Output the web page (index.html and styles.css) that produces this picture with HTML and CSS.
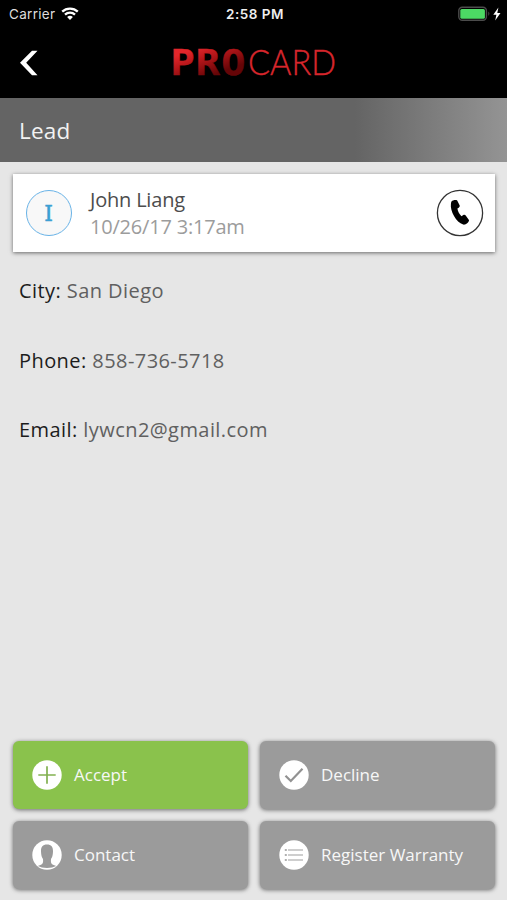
FILE: index.html
```
<!DOCTYPE html>
<html lang="en">
<head>
    <meta charset="UTF-8">
    <title>ProCard - Lead</title>
    <meta name="viewport" content="width=device-width, initial-scale=1">
    <link rel="stylesheet" href="styles.css">
</head>
<body>
    <header>
        <div class="status-bar">
            <div class="carrier">
                <span>Carrier</span>
                <svg width="18" height="14" viewBox="0 0 18 14">
                    <path d="M1.2 4.7a11.2 11.2 0 0 1 15.6 0M4 7.7a7.2 7.2 0 0 1 10 0" fill="none" stroke="#fff" stroke-width="2.3"/>
                    <path d="M9 13 6.1 10.1a4.2 4.2 0 0 1 5.8 0z" fill="#fff"/>
                </svg>
            </div>
            <div class="time">2:58 PM</div>
            <div class="power">
                <svg width="43" height="16" viewBox="0 0 43 16">
                    <rect x=".8" y="1.3" width="27.6" height="13" rx="3.5" fill="none" stroke="#4b4b4b" stroke-width="1.4"/>
                    <rect x="2.3" y="3" width="24.6" height="9.8" rx="1.5" fill="#4cd964"/>
                    <path d="M30.3 5.6q2.2 2.2 0 4.4z" fill="#4b4b4b"/>
                    <path d="M40.4 1.5 35.3 8.7h3.1l-1.2 5.9 5.3-7.7h-3.2z" fill="#fff"/>
                </svg>
            </div>
        </div>
        <div class="nav-bar">
            <a class="back" href="#" aria-label="Back">
                <svg width="18" height="26" viewBox="0 0 18 26">
                    <path d="M17.5.7H12L0 12.8 12 25.3h5.5L6.2 12.8z" fill="#fff"/>
                </svg>
            </a>
            <svg class="logo" width="170" height="56" viewBox="-2 -10 170 56">
                <defs>
                    <linearGradient id="red" gradientUnits="userSpaceOnUse" x1="20" y1="4" x2="32" y2="32">
                        <stop offset="0" stop-color="#e3262b"/>
                        <stop offset=".4" stop-color="#b5161a"/>
                        <stop offset="1" stop-color="#650507"/>
                    </linearGradient>
                </defs>
                <text class="logo-pro" x="-.5" y="30" transform="scale(1.15 1)" fill="url(#red)" stroke="url(#red)">PRO</text>
                <text class="logo-card" x="77" y="30" textLength="88" lengthAdjust="spacingAndGlyphs">CARD</text>
            </svg>
        </div>
    </header>

    <h1>Lead</h1>

    <main>
        <div class="card">
            <div class="avatar">I</div>
            <div class="who">
                <div class="name">John Liang</div>
                <div class="date">10/26/17 3:17am</div>
            </div>
            <a class="call" href="#" aria-label="Call">
                <svg width="48" height="48" viewBox="0 0 48 48">
                    <circle cx="24" cy="24" r="22.6" fill="#fff" stroke="#333" stroke-width="1.3"/>
                    <path d="M15.500 12.500c1.200-1.300 4.300-1.900 5.700-.9l2.500 4.900c.2 1.100-.3 1.800-1 2.200l-1.300.8c.5 3.100 1.900 5.500 4.100 7.700l1.800-1.100c.9-.5 1.900-.3 2.400.4l3.400 4.800c-.6 2.700-3 4.600-5.900 4.300-7-2-13.300-14-12.300-20.300.1-1.100.2-2.200.6-2.800z" fill="#000"/>
                </svg>
            </a>
        </div>

        <dl class="details">
            <div><dt>City:</dt> <dd>San Diego</dd></div>
            <div><dt>Phone:</dt> <dd>858-736-5718</dd></div>
            <div><dt>Email:</dt> <dd>lywcn2@gmail.com</dd></div>
        </dl>
    </main>

    <div class="actions">
        <button class="accept">
            <svg width="30" height="30" viewBox="0 0 30 30">
                <circle cx="15" cy="15" r="14.7" fill="#fff"/>
                <path d="M6.3 15h17.4M15 6.3v17.4" stroke="#82b150" stroke-width="1.7"/>
            </svg>
            <span>Accept</span>
        </button>
        <button>
            <svg width="30" height="30" viewBox="0 0 30 30">
                <circle cx="15" cy="15" r="14.7" fill="#fff"/>
                <path d="M6.5 15.7l5.3 5.3L23.5 8.7" fill="none" stroke="#929292" stroke-width="2.2"/>
            </svg>
            <span>Decline</span>
        </button>
        <button>
            <svg width="30" height="30" viewBox="0 0 30 30">
                <circle cx="15" cy="15" r="14.7" fill="#fff"/>
                <path d="M15 4.500c4.200 0 6.200 2.700 6 6.900-.1 3.800-.9 6-2 7.600-.4 3.200.1 5 2 5.700l3.200 1.200Q20.500 28 15 28t-9.200-2.100L9 24.700c1.900-.7 2.400-2.500 2-5.700-1.100-1.600-1.900-3.800-2-7.600-.2-4.200 1.800-6.900 6-6.900z" fill="#9a9a9a"/>
            </svg>
            <span>Contact</span>
        </button>
        <button>
            <svg width="30" height="30" viewBox="0 0 30 30">
                <circle cx="15" cy="15" r="14.7" fill="#fff"/>
                <path d="M9 9.9h15M9 15h15M9 20.1h15" stroke="#bebebe" stroke-width="1.5"/>
                <path d="M5.8 9.9h2M5.8 15h2M5.8 20.1h2" stroke="#b0b0b0" stroke-width="2"/>
            </svg>
            <span>Register Warranty</span>
        </button>
    </div>
</body>
</html>
```
FILE: styles.css
```
* {
    box-sizing: border-box;
}
body {
    margin: 0;
    height: 900px;
    display: flex;
    flex-direction: column;
    background-color: #e6e6e6;
    font-family: "Open Sans", sans-serif;
}
svg {
    display: block;
}
header {
    height: 98px;
    background-color: #000;
    color: #fff;
}
.status-bar {
    display: grid;
    grid-template-columns: 1fr auto 1fr;
    align-items: center;
    height: 27px;
    padding: 0 6px 0 9px;
    font-family: Inter, sans-serif;
    font-size: 13.5px;
}
.carrier {
    display: flex;
    align-items: center;
    gap: 6px;
    color: #ddd;
}
.carrier span {
    letter-spacing: 0.3px;
}
.time {
    font-weight: 600;
    font-size: 13.5px;
    letter-spacing: 0.5px;
    color: #eee;
}
.power {
    justify-self: end;
}
.nav-bar {
    display: grid;
    grid-template-columns: 1fr auto 1fr;
    align-items: center;
    height: 71px;
    padding: 0 0 0 20px;
}
.back {
    justify-self: start;
}
.logo {
    margin-right: 20px;
}
.logo-pro {
    font-family: "DejaVu Sans Mono", monospace;
    font-weight: 700;
    font-size: 35px;
    letter-spacing: 1px;
    stroke-width: 0.4px;
}
.logo-card {
    font-family: Lato, sans-serif;
    font-weight: 300;
    font-size: 35px;
    fill: #d7262c;
    stroke: #d7262c;
    stroke-width: 0.4px;
}
h1 {
    margin: 0;
    height: 64px;
    padding-left: 19px;
    line-height: 65px;
    font-size: 22.5px;
    font-weight: 400;
    letter-spacing: 0.2px;
    color: #f2f2f2;
    background: linear-gradient(to right, #646464 0%, #646464 70%, #949494 100%);
}
main {
    flex: 1;
}
.card {
    display: flex;
    align-items: center;
    height: 78px;
    margin: 12px 12px 0 13px;
    padding: 0 11px 0 13px;
    background-color: #fff;
    box-shadow: 0 1px 4px rgba(0,0,0,0.55);
}
.avatar {
    width: 46px;
    height: 46px;
    border: 1.5px solid #69b3e7;
    border-radius: 50%;
    background-color: #f8f8f8;
    color: #3d9fd3;
    font-family: "DejaVu Serif", serif;
    font-size: 22px;
    line-height: 45px;
    text-align: center;
    text-indent: -1px;
    -webkit-text-stroke: 0.5px #3d9fd3;
}
.who {
    flex: 1;
    margin-left: 18px;
    font-size: 20px;
    line-height: 27px;
    letter-spacing: -0.2px;
}
.name {
    color: #4d4d4d;
}
.date {
    color: #9c9c9c;
}
.details {
    margin: 25px 0 0 19px;
    font-size: 20px;
    line-height: 27px;
    letter-spacing: 0.43px;
}
.details div {
    margin-bottom: 42.6px;
}
.details dt,
.details dd {
    display: inline;
    margin: 0;
}
.details dt {
    color: #1c1c1c;
}
.details dd {
    color: #606060;
}
.actions {
    display: grid;
    grid-template-columns: 1fr 1fr;
    grid-auto-rows: 68px;
    gap: 12px;
    padding: 0 12px 11px 13px;
}
button {
    display: flex;
    align-items: center;
    gap: 12px;
    padding: 0 0 0 19px;
    border: none;
    border-radius: 6px;
    background-color: #9b9b9b;
    color: #f7f7f7;
    font-family: inherit;
    font-size: 17px;
    letter-spacing: 0;
    box-shadow: 0 1px 4px rgba(0,0,0,0.55);
}
button span {
    padding-bottom: 2px;
}
.accept {
    background-color: #8ac24c;
}
```
